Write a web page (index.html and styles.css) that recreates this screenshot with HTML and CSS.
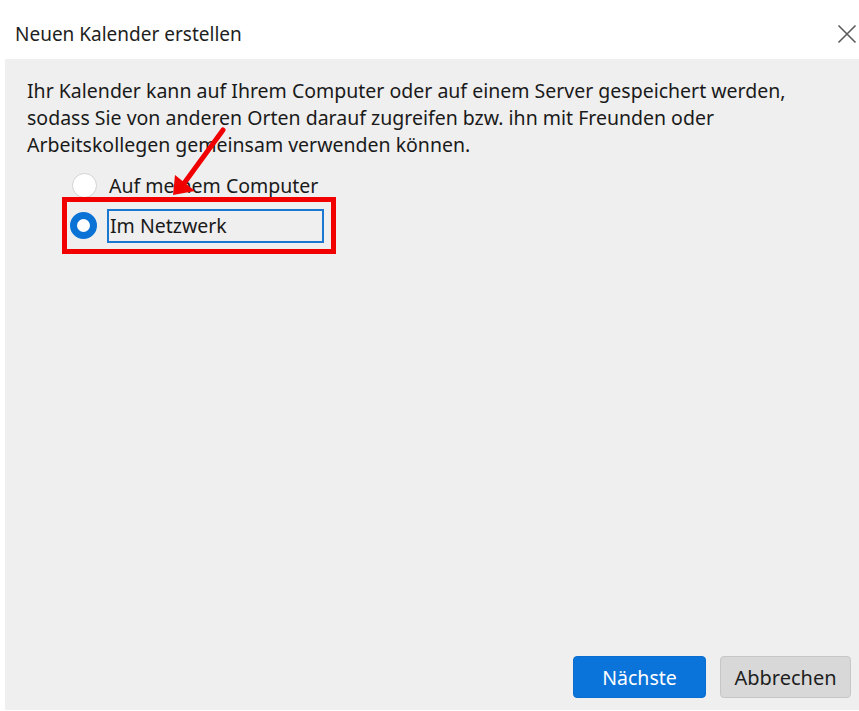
FILE: index.html
```html
<!DOCTYPE html>
<html lang="de">
<head>
<meta charset="utf-8">
<title>Neuen Kalender erstellen</title>
<link rel="stylesheet" href="styles.css">
</head>
<body>
<div class="dialog">
  <header class="titlebar">
    <span class="title">Neuen Kalender erstellen</span>
    <button class="close" aria-label="Schließen">
      <svg width="20" height="20" viewBox="0 0 20 20"><path d="M1.5 1.5L18.5 18.5M18.5 1.5L1.5 18.5" stroke="#5a5a5a" stroke-width="1.6" fill="none"/></svg>
    </button>
  </header>
  <main class="panel">
    <p class="intro">Ihr Kalender kann auf Ihrem Computer oder auf einem Server gespeichert werden,<br>sodass Sie von anderen Orten darauf zugreifen bzw. ihn mit Freunden oder<br>Arbeitskollegen gemeinsam verwenden können.</p>
    <div class="options">
      <label class="option">
        <span class="radio"></span>
        <span class="label">Auf meinem Computer</span>
      </label>
      <label class="option highlighted">
        <span class="radio checked"></span>
        <span class="label focused">Im Netzwerk</span>
      </label>
    </div>
    <svg class="pointer" width="70" height="80" viewBox="0 0 70 80">
      <path d="M57 3L19 55" stroke="#f00000" stroke-width="5" fill="none" stroke-linecap="round"/>
      <path d="M7 68L9 48L29 64Z" fill="#f00000"/>
    </svg>
    <div class="spacer"></div>
    <footer class="actions">
      <button class="btn primary">Nächste</button>
      <button class="btn">Abbrechen</button>
    </footer>
  </main>
</div>
</body>
</html>
```

FILE: styles.css
```css
html, body {
  margin: 0;
  padding: 0;
  background: #ffffff;
}

body {
  font-family: "Noto Sans", "Open Sans", sans-serif;
  color: #1a1a1a;
  width: 859px;
  height: 711px;
  overflow: hidden;
}

.dialog {
  display: flex;
  flex-direction: column;
  height: 710px;
}

.titlebar {
  height: 59px;
  display: flex;
  align-items: center;
  justify-content: space-between;
  padding: 0 2px 0 15px;
  box-sizing: border-box;
}

.title {
  font-size: 19px;
  color: #1e1e1e;
  margin-top: 8px;
}

.close {
  border: none;
  background: none;
  padding: 0;
  width: 20px;
  height: 20px;
  margin-top: 8px;
}

.close svg {
  display: block;
}

.panel {
  position: relative;
  flex: 1;
  margin-left: 5px;
  background: #efefef;
  display: flex;
  flex-direction: column;
  padding: 0 8px 12px 22px;
}

.intro {
  margin: 18px 0 0 0;
  font-size: 19.5px;
  line-height: 27px;
}

.options {
  display: flex;
  flex-direction: column;
  margin-top: 12px;
  margin-left: 35px;
}

.option {
  display: flex;
  align-items: center;
  gap: 12px;
  font-size: 19.5px;
  height: 30px;
  margin-left: 10px;
}

.option.highlighted {
  box-sizing: border-box;
  margin-left: 0;
  margin-top: -3px;
  height: 57px;
  width: 274px;
  border: 5px solid #f20000;
  padding-left: 3px;
  gap: 10px;
}

.radio {
  width: 25px;
  height: 25px;
  border-radius: 50%;
  background: #ffffff;
  border: 1px solid #d3d3d3;
  box-sizing: border-box;
  flex: none;
}

.radio.checked {
  width: 27px;
  height: 27px;
  border: 7.5px solid #0b73d6;
  background: #ffffff;
}

.label.focused {
  border: 2px solid #1b78d0;
  width: 217px;
  height: 34px;
  box-sizing: border-box;
  display: flex;
  align-items: center;
  padding-left: 1px;
}

.pointer {
  position: absolute;
  left: 161px;
  top: 68px;
}

.spacer {
  flex: 1;
}

.actions {
  display: flex;
  justify-content: flex-end;
  gap: 14px;
}

.btn {
  font-family: "Noto Sans", "Open Sans", sans-serif;
  font-size: 20px;
  height: 42px;
  width: 131px;
  border-radius: 4px;
  border: 1px solid #c6c6c6;
  background: #d8d8d8;
  color: #1e1e1e;
  padding: 0;
}

.btn.primary {
  width: 133px;
  font-size: 19.5px;
  background: #0a74da;
  border-color: #0a6ed0;
  color: #ffffff;
}
```
